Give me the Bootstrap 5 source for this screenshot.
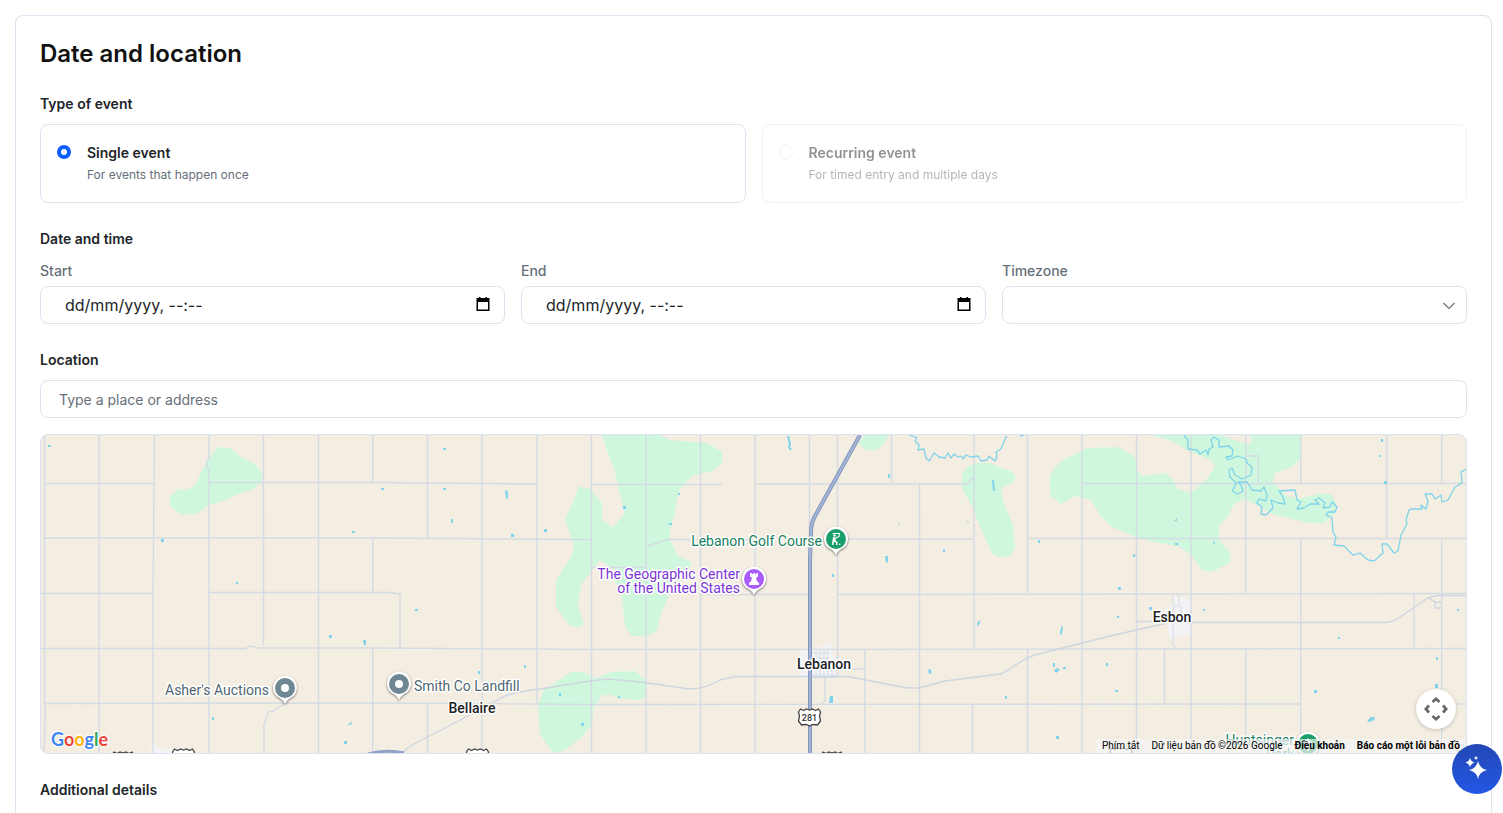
<!DOCTYPE html>
<html lang="en-GB">
<head>
<meta charset="utf-8">
<meta name="viewport" content="width=device-width, initial-scale=1">
<title>Date and location</title>
<link href="https://cdn.jsdelivr.net/npm/bootstrap@5.3.0/dist/css/bootstrap.min.css" rel="stylesheet">
<style>
:root { --line: #dde3f0; --ink: #212529; --soft: #66707a; }
body { font-family: Inter, "Liberation Sans", sans-serif; font-size: 14px; line-height: 20px; color: var(--ink); background: #fff; }
.page-wrap { padding: 15px 11px 0 15px; }
.panel { border: 1px solid var(--line); border-bottom: 0; border-radius: 8px 8px 0 0; padding: 20px 24px 12px; }
.panel h1 { font-size: 24px; line-height: 36px; font-weight: 600; color: #111; margin: 0 0 22px; }
.heading { font-size: 14px; line-height: 20px; font-weight: 600; margin: 0 0 10px; }
.heading.is-next { margin-top: 26px; }
.heading.is-group { margin-bottom: 12px; }
.option { border: 1px solid var(--line); border-radius: 8px; padding: 17px 16px; }
.option .form-check-input { width: 14px; height: 14px; margin: 3px 16px 0 0; border-color: var(--line); flex: none; }
.option .form-check-input:checked { background: #fff; border: 4px solid #0d5ffd; background-image: none; }
.option label { font-weight: 600; line-height: 22px; }
.option small { display: block; font-size: 12px; font-weight: 400; line-height: 21px; color: var(--soft); }
.option.is-off { opacity: .5; }
.option.is-off label, .option.is-off .form-check-input { opacity: 1; }
.field-name { font-size: 14px; line-height: 20px; font-weight: 500; color: var(--soft); margin-bottom: 5px; }
.form-control, .form-select { border-color: var(--line); border-radius: 8px; height: 38px; }
.when { font-size: 16px; line-height: 24px; padding: 6px 44px 6px 24px; }
.when::placeholder { color: var(--ink); opacity: 1; }
.picker { position: absolute; right: 14px; top: 10px; border: 0; background: none; padding: 0; width: 16px; height: 16px; }
.picker svg { display: block; }
.form-select { background-size: 14px 14px; background-position: right 10px center; background-image: url("data:image/svg+xml,%3Csvg xmlns='http://www.w3.org/2000/svg' viewBox='0 0 14 14'%3E%3Cpath d='M1.5 5 7 10.500 12.500 5' fill='none' stroke='%23707070' stroke-width='1.200'/%3E%3C/svg%3E"); }
.place { font-size: 14px; padding: 7px 18px; }
.place::placeholder { color: var(--soft); }
.map { position: relative; height: 320px; border: 1px solid var(--line); border-radius: 8px; overflow: hidden; background: #f4ede1; }
.map > svg { display: block; width: 100%; height: 100%; }
.map text { font-family: Roboto, sans-serif; font-size: 14px; paint-order: stroke; stroke: #fff; stroke-width: 3px; stroke-linejoin: round; }
.map .town { font-weight: 500; fill: #202124; }
.map .brand { font-family: Lato, sans-serif; font-size: 18px; font-weight: 700; stroke-width: 2px; }
.map .route { font-size: 9px; font-weight: 500; stroke: none; }
.legal { position: absolute; right: 0; bottom: 0; font-family: Roboto, sans-serif; font-size: 10px; line-height: 14px; }
.legal > * { background: rgba(245,245,245,.7); color: #000; padding: 0 6px; border: 0; text-decoration: none; }
.legal a { font-weight: 700; }
.pan { position: absolute; right: 10px; bottom: 24px; width: 40px; height: 40px; border: 0; border-radius: 50%; background: #fff; box-shadow: 0 1px 4px rgba(0,0,0,.2); padding: 0; }
.assist { position: fixed; right: 1px; bottom: 19px; width: 50px; height: 50px; border: 0; border-radius: 50%; padding: 0; background: linear-gradient(#2348b5, #2357e6); }
.pan svg, .assist svg { display: block; margin: auto; }
</style>
</head>
<body>
<main class="page-wrap min-vh-100 d-flex flex-column">
<section class="panel flex-grow-1">
  <h1>Date and location</h1>

  <h2 class="heading">Type of event</h2>
  <div class="row gx-3">
    <div class="col-6"><div class="option d-flex align-items-start">
      <input class="form-check-input" type="radio" name="kind" id="single" checked>
      <label for="single">Single event<small>For events that happen once</small></label>
    </div></div>
    <div class="col-6"><div class="option is-off d-flex align-items-start">
      <input class="form-check-input" type="radio" name="kind" id="recurring" disabled>
      <label for="recurring">Recurring event<small>For timed entry and multiple days</small></label>
    </div></div>
  </div>

  <h2 class="heading is-next is-group">Date and time</h2>
  <div class="row gx-3">
    <div class="col-4"><label class="field-name d-block" for="start">Start</label>
      <div class="position-relative"><input class="form-control when" type="text" id="start" placeholder="dd/mm/yyyy, --:--"><button class="picker" type="button" aria-label="Pick start"><svg width="16" height="16" viewBox="0 0 16 16"><path fill-rule="evenodd" d="M4 1H5.500V2H10.500V1H12V2H14.500V15H1.500V2H4ZM3 6V13.500H13V6Z"/></svg></button></div></div>
    <div class="col-4"><label class="field-name d-block" for="end">End</label>
      <div class="position-relative"><input class="form-control when" type="text" id="end" placeholder="dd/mm/yyyy, --:--"><button class="picker" type="button" aria-label="Pick end"><svg width="16" height="16" viewBox="0 0 16 16"><path fill-rule="evenodd" d="M4 1H5.500V2H10.500V1H12V2H14.500V15H1.500V2H4ZM3 6V13.500H13V6Z"/></svg></button></div></div>
    <div class="col-4"><label class="field-name d-block" for="zone">Timezone</label><select class="form-select" id="zone"><option></option></select></div>
  </div>

  <h2 class="heading is-next"><label for="place">Location</label></h2>
  <input class="form-control place mb-3" type="text" id="place" placeholder="Type a place or address">

  <div class="map">
    <svg viewBox="41 435 1425 318" preserveAspectRatio="xMidYMid slice" role="img" aria-label="Map">
      <defs>
        <path id="pin" d="M0 16C-2 12-5 10-8 8.500A12 12 0 1 1 8 8.500C5 10 2 12 0 16Z" fill="#fff" style="filter:drop-shadow(0 1px 1px rgba(0,0,0,.5))"/>
        <g id="shield"><path d="M-9-8 -6-6.500 -3-8 0-7 3-8 6-6.500 9-8 11-5 10-1 11 4 8 8 3 7.500 0 9 -3 7.500 -8 8 -11 4 -10-1 -11-5Z" fill="#fff" stroke="#444" stroke-width="1.300"/></g>
      </defs>
      <!-- parks and reserves -->
      <g fill="#cff7de">
        <path d="M219 447 230 448 242 458 253 463 262 472V482L252 490 238 494 226 500 209 505 196 514 181 515 170 506V496L179 489 188 490 196 484 200 475 205 465 210 456Z"/>
        <path d="M602 435H660L670 440 707 443 722 452V463L712 471 692 476 679 490 674 516 670 530 670 540 678 556 691 562 689 572 672 590 663 608 656 632 647 636H631L625 625 621 592 614 580 618 572 600 560 591 571 581 585 578 606 584 624 579 628 569 625 556 607V580L572 555 574 545 565 520 574 500 579 486 590 489 602 503V520L613 527 625 514 619 490 614 468 606 448Z"/>
        <path d="M571 672H583L596 678 612 672 635 671 646 681V697L640 700 620 699 611 695 602 695 594 708 591 726 580 739 563 751 553 753 540 734 538 705 544 690Z"/>
        <path d="M858 443 865 435H889L885 442 877 450H866Z"/>
        <path d="M975 463 990 463 1001 468 1011 471 1016 477 1013 483 1004 486 1001 492 1005 507 1013 525 1015 548 1010 556 998 557 992 553 984 536 978 522 973 508 962 488V474L968 467Z"/>
        <path d="M1050 475 1060 462 1087 448 1119 447 1135 457 1138 471 1142 476 1165 473 1172 479 1178 489 1191 493 1207 479 1215 466 1211 460 1189 451 1170 440 1150 435H1301V458L1292 467 1275 473 1273 482 1287 496 1299 499 1318 494 1331 494 1336 502 1335 514 1323 523 1309 523 1275 515 1245 499 1234 504 1228 516 1219 526V539L1230 553 1231 561 1222 567 1211 572 1202 570 1191 555 1180 547 1150 541 1136 537 1112 527 1100 515 1091 500 1075 496 1061 504 1050 495Z"/>
      </g>
      <path d="M1220 435H1250L1252 440 1249 444 1237 441Z" fill="#f4ede1"/>
      <g fill="#f3f3f5">
        <path d="M801 650H812L822 646 828 642 832 645 831 654 836 656V678H801Z"/>
        <path d="M1164 607H1170L1174 597H1180L1191 600V634L1170 639 1168 626Z"/>
        <path d="M150 753 152 744 156 742 157 748 170 749 180 747 192 753Z"/>
      </g>
      <!-- section roads -->
      <g fill="none" stroke="#d3dce4" stroke-width="1.400">
        <path d="M44.500 435V703M99 435V753M154.500 435 153 593V753M209 435V457L206 464 209 471V753M263.500 435V645M318.500 435V753M372.700 435V483M372.700 538V593M372.700 648V753M400 593V648M427.500 435V538M427.500 704V753M482 435V753M537 435V704M591.500 435V753M646 435V753M700.500 435V753M755 435V753M809.500 435V530M837.500 435V678M864.700 650V753M891.500 435V484M919.500 484V753M974 435V648M972.500 704V753M1027.500 435V593M1027.500 649V753M1082 435V753M1136.500 435V753M1191 435V753M1164.500 649V704M1245.700 435V456H1258.500V483M1245.700 456V593M1245.700 650V753M1300.700 435V483M1300.700 538V753M1386.700 435V538M1414 593V649M1441.700 435V483M1441.700 540V753"/>
        <path d="M44 483.500H155M209 482.500H372L537 484M591 484.500H723M755 484H967Q970 479 974 478M1082 483.500H1466M44 538H372L591 539.500M646 546.500 667 539.500H760M840 539H974M1027 538.500H1466M591 567.500H646M41 593.500H153M209 592.500H390L400 594M700 594.500H809M837 594.500 1200 594 1466 593.500M41 648.500H246Q250 644 256 648L372 648 600 649.500 1120 649 1466 648.500M44 703.500 372 703 600 704.500 1300 704M1456 704H1466M284 704 273 711 268 712 264 725V753M45 703V722L44 753M864 669H850M825 678V701L821 704"/>
        <path stroke="#cdd6e1" d="M401 753 412 745 470 715 505 696Q520 691 540 689L590 681 608 679 640 682 690 689Q706 689 720 680L735 676.500H848L907 688 919 688 945 681 1000 674C1012 670 1020 659 1035 655L1110 636 1165 623.500M1136 621.500H1160M1192 622.500H1385Q1393 622 1400 617L1425 600Q1430 596 1440 595.500H1466M1428 597 1435 602H1441M1435 602V608H1441"/>
        <path d="M1173 594V646L1178 649M1179 595V606H1174M1181 606V614H1190" stroke-width="1"/>
        <path d="M813 653H829M813 658H829M812 675H836M816 650V674M820 650V674M824 650V674M828 650V674M832 660V674M813 677.500H836" stroke-width="1"/>
      </g>
      <!-- creeks -->
      <g fill="none" stroke="#7fd3ea" stroke-width="1.300" stroke-linejoin="round">
        <path d="M910 435 917 438 915 441 919 445 918 450 924 449 926 458 929 461 934 453 939 457 945 458 948 453 951 458 954 454 958 457 961 456 963 459 966 455 971 457 978 456 981 461 987 460 989 456 995 461 997 456 996 452 1001 449 1005 439 1007 436M1020 436 1024 435"/>
        <path d="M1184 435 1188 440V449L1197 450 1200 454 1206 450 1208 455 1209 449 1213 447 1211 440 1214 437 1219 440 1219 447 1229 446 1233 450 1232 456 1226 457 1228 460 1238 456 1246 459 1247 463 1252 467 1251 475 1242 479 1235 475 1232 468 1229 470 1230 477 1236 483 1234 488 1232 491 1238 494 1243 491 1241 485 1238 482 1247 482 1252 490 1261 491 1264 487 1267 495 1266 501 1259 499 1257 503 1262 507 1261 514 1266 515 1273 508 1271 500 1278 503 1285 504 1283 497 1279 491 1295 490 1297 500 1301 502 1297 509 1304 508 1310 504 1319 504 1315 500 1319 498 1325 503 1323 508 1330 507 1332 502 1337 507 1335 512 1328 512 1326 515 1332 518 1333 532 1336 537 1334 545 1344 546 1353 555 1360 553 1368 560 1374 561 1383 553 1382 544 1387 544 1394 553 1398 551 1401 535 1407 524 1406 520 1409 510 1411 509H1422L1421 505 1426 509 1428 501 1425 494 1432 494 1435 499 1441 495 1442 502 1448 500 1455 487 1459 485 1462 482 1461 472 1466 469"/>
        <path d="M788 436 790 444 789 447 791 450M993 480 994 491" stroke-width="2"/>
      </g>
      <!-- ponds -->
      <g fill="#7fd3ea">
        <path d="M505 490 508 492V498L506 499ZM885 556H888V562L886 563ZM830 696H833V703H829ZM928 669 931 670 932 673 929 674ZM977 623 980 620V622L978 627ZM1060 632 1062 625 1063 629 1061 636ZM1054 670 1058 668 1060 670 1056 673ZM1367 721 1371 717 1375 717 1374 720 1370 722ZM1174 521 1177 518V521ZM1213 543 1215 541V544ZM348 725 352 721 351 725Z"/>
        <path d="M363 640H366V645H364ZM329 635H332V638H329ZM478 671H480V674H478ZM443 448H446V450H443ZM443 488H446V490H443ZM451 519H453V523H451ZM511 534H514V537H511ZM544 529H547V532H544ZM415 609H418V611H415ZM524 665H526V668H524ZM48 445H51V447H48ZM161 539H164V542H161ZM212 717H214V720H212ZM344 741H347V744H344ZM381 488H384V490H381ZM352 531H355V533H352ZM236 582H238V584H236ZM678 493H680V495H678ZM669 523H672V525H669ZM623 506H626V509H623ZM559 693H561V696H559ZM581 723H584V726H581ZM618 696H620V698H618ZM888 474H890V478H888ZM898 521 900 525H899ZM967 519 969 523H968ZM943 549H945V552H943ZM1038 540H1040V543H1038ZM832 574H834V577H832ZM1118 587H1121V590H1118ZM1117 616H1119V618H1117ZM1381 439H1383V442H1381ZM1379 455H1381V457H1379ZM1384 481H1387V484H1384ZM1175 543H1178V545H1175ZM1133 554H1135V557H1133ZM1053 663H1055V667H1053ZM1063 667H1066V669H1063ZM1005 696H1007V699H1005ZM1106 663H1108V666H1106ZM1115 690H1118V692H1115ZM1056 736H1059V739H1056ZM1435 684H1438V688H1435ZM1436 657H1438V660H1436ZM1457 609H1459V611H1457ZM1314 690H1317V693H1314ZM1338 637H1340V639H1338ZM1203 609H1205V611H1203ZM1149 607H1152V610H1149Z"/>
      </g>
      <!-- highway -->
      <path d="M860 435 815 516Q811 523 811 532L810 560V753" fill="none" stroke="#7b8fb8" stroke-width="4"/>
      <path d="M860 435 815 516Q811 523 811 532L810 560V753" fill="none" stroke="#a3b5d6" stroke-width="2.400"/>
      <path d="M368 754Q386 749 404 753" fill="none" stroke="#8ea1c9" stroke-width="3"/>
      <use href="#shield" x="809.500" y="717"/>
      <text class="route" x="809.500" y="721" text-anchor="middle" fill="#333">281</text>
      <use href="#shield" x="183.500" y="757"/><use href="#shield" x="477.500" y="757"/><use href="#shield" x="123" y="760"/><use href="#shield" x="832" y="760"/><use href="#shield" x="1121" y="756"/>

      <g fill="#4f6772">
        <text x="165" y="695">Asher's Auctions</text>
        <text x="414" y="691">Smith Co Landfill</text>
      </g>
      <text class="town" x="472" y="713" text-anchor="middle">Bellaire</text>
      <text class="town" x="824" y="669" text-anchor="middle">Lebanon</text>
      <text class="town" x="1172" y="622" text-anchor="middle">Esbon</text>
      <g text-anchor="end">
        <text x="822" y="546" fill="#188061">Lebanon Golf Course</text>
        <text x="740" y="579" fill="#7b35d6">The Geographic Center</text>
        <text x="740" y="593" fill="#7b35d6">of the United States</text>
        <text x="1294" y="745" fill="#188061">Huntsinger</text>
        <text x="1294" y="759" fill="#188061">Park</text>
      </g>
      <g transform="translate(285 688)"><use href="#pin"/><circle r="10" fill="#6f8793"/><circle r="4" fill="#fff"/></g>
      <g transform="translate(399 684)"><use href="#pin"/><circle r="10" fill="#6f8793"/><circle r="4" fill="#fff"/></g>
      <g transform="translate(836 539)"><use href="#pin"/><circle r="10" fill="#1a9e6a"/><path d="M-3.500-5.500H3.500L3-2.500L0-1" fill="none" stroke="#fff" stroke-width="1.100"/><path d="M-3-2 0-1.500-.5 1.500 1.500 3V6H0V3.800L-2 2.500-2.500 6H-4L-3.500 1Z" fill="#fff"/><circle cx="-1.500" cy="-3.500" r="1.200" fill="#fff"/><circle cx="3.700" cy="5.300" r=".8" fill="#fff"/></g>
      <g transform="translate(754 579)"><use href="#pin"/><circle r="10" fill="#a95bfb"/><path d="M-4-6H-2.300V-4.800H-1V-6H1V-4.800H2.300V-6H4V-2.500L2.200-1.500 2.800 2 5 4V6H-5V4L-2.800 2-2.200-1.500-4-2.500Z" fill="#fff"/></g>
      <g transform="translate(1308 744)"><use href="#pin"/><circle r="10" fill="#1a9e6a"/><path d="M0-6 4-1H2L5 4H1V7H-1V4H-5L-2-1H-4Z" fill="#fff"/></g>
      <text class="brand" x="51" y="746"><tspan fill="#4285f4">G</tspan><tspan fill="#ea4335">o</tspan><tspan fill="#fbb305">o</tspan><tspan fill="#4285f4">g</tspan><tspan fill="#34a853">l</tspan><tspan fill="#ea4335">e</tspan></text>
    </svg>
    <button class="pan" type="button" aria-label="Map camera controls"><svg width="24" height="24" viewBox="0 0 24 24" fill="none" stroke="#666" stroke-width="2.600"><path d="M8.500 5 12 1.800 15.500 5M8.500 19 12 22.200 15.500 19M5 8.500 1.800 12 5 15.500M19 8.500 22.200 12 19 15.500"/></svg></button>
    <div class="legal d-flex"><button type="button">Phím tắt</button><span>Dữ liệu bản đồ ©2026 Google</span><a href="#">Điều khoản</a><a href="#">Báo cáo một lỗi bản đồ</a></div>
  </div>

  <h2 class="heading is-next mb-0">Additional details</h2>
</section>
</main>
<button class="assist" type="button" aria-label="Assistant"><svg width="26" height="26" viewBox="0 0 26 26" fill="#fff"><path d="M14 5Q15.500 12.500 23 14Q15.500 15.500 14 23Q12.500 15.500 5 14Q12.500 12.500 14 5ZM6 2Q7 5.500 10.500 6.500Q7 7.500 6 11Q5 7.500 1.500 6.500Q5 5.500 6 2ZM12 0Q12.500 1.500 14 2Q12.500 2.500 12 4Q11.500 2.500 10 2Q11.500 1.500 12 0Z"/></svg></button>
<script src="https://cdn.jsdelivr.net/npm/bootstrap@5.3.0/dist/js/bootstrap.bundle.min.js"></script>
</body>
</html>
